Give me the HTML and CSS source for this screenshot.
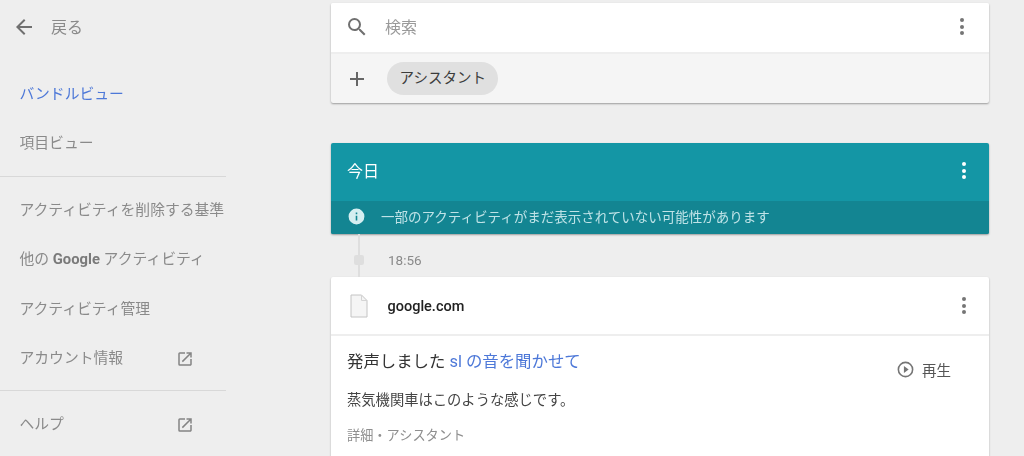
FILE: index.html
```html
<!DOCTYPE html>
<html lang="ja">
<head>
<meta charset="utf-8">
<title>アクティビティ</title>
<link rel="stylesheet" href="styles.css">
</head>
<body>
<div class="page">
  <aside class="sidebar">
    <div class="back">
      <svg class="back-icon" viewBox="0 0 24 24"><path d="M20 11H7.83l5.59-5.59L12 4l-8 8 8 8 1.41-1.41L7.83 13H20v-2z"/></svg>
      <span>戻る</span>
    </div>
    <nav class="group first">
      <div class="item active">バンドルビュー</div>
      <div class="item">項目ビュー</div>
    </nav>
    <hr class="rule">
    <nav class="group">
      <div class="item">アクティビティを削除する基準</div>
      <div class="item">他の <b class="brand">Google</b> アクティビティ</div>
      <div class="item">アクティビティ管理</div>
      <div class="item with-icon">アカウント情報
        <svg class="ext" viewBox="0 0 24 24"><path d="M19 19H5V5h7V3H5a2 2 0 0 0-2 2v14a2 2 0 0 0 2 2h14c1.1 0 2-.9 2-2v-7h-2v7zM14 3v2h3.59l-9.83 9.83 1.41 1.41L19 6.41V10h2V3h-7z"/></svg>
      </div>
    </nav>
    <hr class="rule">
    <nav class="group">
      <div class="item with-icon">ヘルプ
        <svg class="ext" viewBox="0 0 24 24"><path d="M19 19H5V5h7V3H5a2 2 0 0 0-2 2v14a2 2 0 0 0 2 2h14c1.1 0 2-.9 2-2v-7h-2v7zM14 3v2h3.59l-9.83 9.83 1.41 1.41L19 6.41V10h2V3h-7z"/></svg>
      </div>
    </nav>
  </aside>

  <main class="main">
    <section class="search-card">
      <div class="search-row">
        <svg class="search-icon" viewBox="0 0 24 24"><path d="M15.5 14h-.79l-.28-.27A6.47 6.47 0 0 0 16 9.5 6.5 6.5 0 1 0 9.5 16c1.61 0 3.09-.59 4.23-1.57l.27.28v.79l5 4.99L20.49 19l-4.99-5zm-6 0C7.01 14 5 11.99 5 9.5S7.01 5 9.5 5 14 7.01 14 9.5 11.99 14 9.5 14z"/></svg>
        <span class="search-label">検索</span>
        <span class="dots"><i></i><i></i><i></i></span>
      </div>
      <div class="filter-row">
        <svg class="plus-icon" viewBox="0 0 24 24"><path d="M19 13h-6v6h-2v-6H5v-2h6V5h2v6h6v2z"/></svg>
        <span class="chip">アシスタント</span>
      </div>
    </section>

    <section class="day-card">
      <div class="day-head">
        <span class="day-title">今日</span>
        <span class="dots light"><i></i><i></i><i></i></span>
      </div>
      <div class="day-note">
        <svg class="info-icon" viewBox="0 0 24 24"><path d="M12 2a10 10 0 1 0 0 20 10 10 0 0 0 0-20zm1 15h-2v-6h2v6zm0-8h-2V7h2v2z"/></svg>
        <span>一部のアクティビティがまだ表示されていない可能性があります</span>
      </div>
    </section>

    <div class="timeline"><span class="node"></span><span class="time">18:56</span></div>

    <section class="item-card">
      <div class="item-head">
        <svg class="doc-icon" viewBox="0 0 18 24"><path d="M1 1h10.5L17 6.5V23H1z" fill="#f5f5f5" stroke="#c4c4c4"/><path d="M11.5 1v5.5H17" fill="none" stroke="#d4d4d4"/></svg>
        <span class="site">google.com</span>
        <span class="dots"><i></i><i></i><i></i></span>
      </div>
      <div class="item-body">
        <div class="body-text">
          <p class="spoken">発声しました <span class="query">sl の音を聞かせて</span></p>
          <p class="reply">蒸気機関車はこのような感じです。</p>
          <p class="meta">詳細・アシスタント</p>
        </div>
        <div class="play">
          <svg class="play-icon" viewBox="0 0 24 24"><path d="M10 16.5l6-4.5-6-4.5v9zM12 2a10 10 0 1 0 0 20 10 10 0 0 0 0-20zm0 18a8 8 0 1 1 0-16 8 8 0 0 1 0 16z"/></svg>
          <span>再生</span>
        </div>
      </div>
    </section>
  </main>
</div>
</body>
</html>
```
FILE: styles.css
```css
* { box-sizing: border-box; }
html, body { margin: 0; height: 456px; overflow: hidden; background: #eeeeee; }
body { font-family: Roboto, "Noto Sans CJK JP", sans-serif; color: #212121; }
.page { display: flex; height: 456px; overflow: hidden; filter: blur(.3px); }

.sidebar { width: 226px; flex: none; font-size: 14.8px; color: #8a8a8a; }
.back { display: flex; align-items: center; height: 54px; padding: 0 0 2px 12px; font-size: 16px; gap: 15px; }
.back-icon { width: 24px; height: 24px; fill: #707070; margin-top: 2px; }
.group { display: flex; flex-direction: column; }
.group.first { margin-top: 15px; }
.item { height: 49.4px; line-height: 47.4px; padding: 2px 0 0 19.5px; white-space: nowrap; }
.item.active { color: #4d78d8; }
.brand { font-weight: 700; color: #7a7a7a; }
.with-icon { display: flex; align-items: center; justify-content: space-between; padding-right: 32px; }
.ext { width: 18px; height: 18px; fill: #848484; }
.rule { border: 0; border-top: 1px solid #d8d8d8; margin: 8px 0; height: 0; }

.main { width: 658.5px; margin-left: 104.5px; flex: none; }
.search-card { margin-top: 3px; border-radius: 2px; background: #f5f5f5; box-shadow: 0 1px 2px rgba(0,0,0,.35); }
.search-row { display: flex; align-items: center; height: 51px; padding: 0 25px 2px 14.5px; background: #fff; border-bottom: 2px solid #eeeeee; border-radius: 2px 2px 0 0; }
.search-icon { width: 24px; height: 24px; fill: #707070; }
.search-label { margin: 0 0 2px 16px; font-size: 16px; color: #9a9a9a; flex: 1; }
.dots { display: flex; flex-direction: column; gap: 2.5px; }
.dots i { width: 4px; height: 4px; border-radius: 50%; background: #757575; }
.dots.light i { background: #fff; }
.filter-row { display: flex; align-items: center; height: 49px; padding-left: 14.5px; }
.plus-icon { width: 24px; height: 24px; fill: #666; }
.chip { margin-left: 18px; height: 33px; line-height: 33px; padding: 0 12.5px; border-radius: 17px; background: #e0e0e0; font-size: 14.5px; color: #3c3c3c; }

.day-card { margin-top: 40px; border-radius: 2px; overflow: hidden; background: #1496a5; color: #fff; box-shadow: 0 1px 2px rgba(0,0,0,.35); }
.day-head { display: flex; align-items: center; justify-content: space-between; height: 58px; padding: 0 23px 3px 16.5px; font-size: 16px; }
.day-title { margin-bottom: 2px; }
.day-note { display: flex; align-items: center; height: 33px; padding: 0 0 3px 16.5px; background: #138592; font-size: 13.5px; color: #bfe3e7; }
.info-icon { width: 19px; height: 19px; fill: #d5eef1; margin-right: 15px; }

.timeline { position: relative; display: flex; align-items: center; height: 43px; padding: 8px 0 0 57.5px; font-size: 13.5px; color: #8a8a8a; }
.timeline::before { content: ""; position: absolute; left: 27.5px; top: 0; bottom: 0; width: 1.5px; background: #dedede; }
.node { position: absolute; left: 23.5px; top: 21px; width: 10px; height: 10px; border-radius: 2px; background: #dedede; }

.item-card { background: #fff; border-radius: 2px 2px 0 0; box-shadow: 0 1px 2px rgba(0,0,0,.3); height: 200px; }
.item-head { display: flex; align-items: center; height: 59px; padding: 0 23px 0 19.5px; border-bottom: 2px solid #eeeeee; }
.doc-icon { width: 18px; height: 24px; flex: none; }
.site { margin: 2px 0 0 19.5px; flex: 1; font-size: 14.5px; font-weight: 500; color: #212121; }
.item-body { display: flex; justify-content: space-between; padding: 14px 38px 0 16.5px; }
.body-text p { margin: 0; }
.spoken { font-size: 16.4px; line-height: 24px; color: #333; }
.query { color: #4d78d8; }
.reply { margin-top: 14px !important; font-size: 14.3px; line-height: 24px; color: #444; }
.meta { margin-top: 14px !important; font-size: 13.2px; line-height: 20px; color: #8f8f8f; }
.play { display: flex; align-items: center; gap: 7px; height: 24px; margin-top: 7px; font-size: 14.5px; color: #555; }
.play-icon { width: 19px; height: 19px; fill: #757575; }
```
